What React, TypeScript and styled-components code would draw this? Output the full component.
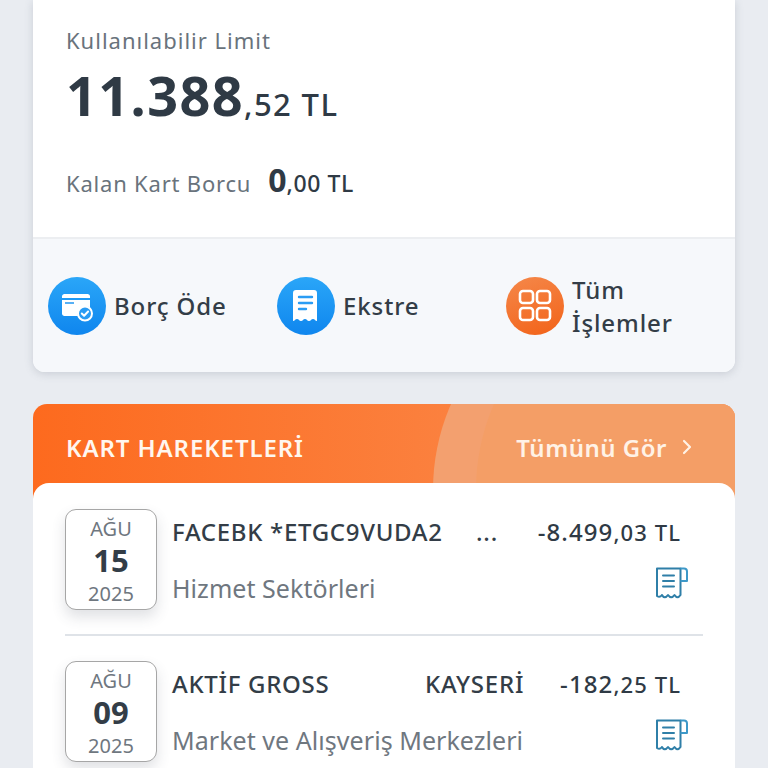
import React from 'react';
import styled, { createGlobalStyle } from 'styled-components';

const GlobalStyle = createGlobalStyle`
  html, body {
    margin: 0;
    padding: 0;
    height: 768px;
    overflow: hidden;
    background: #e9ecf1;
    font-family: 'Noto Sans', 'Open Sans', sans-serif;
    color: #2f3a45;
  }
`;

interface Movement {
  month: string;
  day: string;
  year: string;
  name: string;
  nameWidth: number;
  place: string;
  amount: string;
  cents: string;
  category: string;
}

const movements: Movement[] = [
  { month: 'AĞU', day: '15', year: '2025', name: 'FACEBK *ETGC9VUDA2', nameWidth: 304, place: '...', amount: '-8.499', cents: ',03 TL', category: 'Hizmet Sektörleri' },
  { month: 'AĞU', day: '09', year: '2025', name: 'AKTİF GROSS', nameWidth: 253, place: 'KAYSERİ', amount: '-182', cents: ',25 TL', category: 'Market ve Alışveriş Merkezleri' }
];

const CardPayIcon = () => (
  <svg width="36" height="32" viewBox="0 0 36 32" fill="none">
    <path d="M3 6.5C3 5 4 4 5.500 4h23C30 4 31 5 31 6.500V8H3z" fill="#fff" />
    <path d="M3 10h28v7.500a8 8 0 0 0-12 8.500H5.500C4 26 3 25 3 23.500z" fill="#fff" />
    <path d="M6 13h9" stroke="#1f96f2" strokeWidth="1.500" />
    <circle cx="26" cy="23.500" r="7" fill="#2a9cf4" stroke="#fff" strokeWidth="2" />
    <path d="M22.800 23.500l2.300 2.300 4-4.300" stroke="#fff" strokeWidth="2" strokeLinecap="round" strokeLinejoin="round" />
  </svg>
);

const ReceiptFilledIcon = () => (
  <svg width="28" height="34" viewBox="0 0 28 34" fill="none">
    <path d="M5 1h18a3 3 0 0 1 3 3v28c-2 0-2-2-4-2s-2 2-4 2-2-2-4-2-2 2-4 2-2-2-4-2-2 2-4 2V4a3 3 0 0 1 3-3z" fill="#fff" transform="translate(-1 0)" />
    <path d="M7 8h13M7 14h13M7 20h7" stroke="#2a9cf4" strokeWidth="2.400" strokeLinecap="round" />
  </svg>
);

const GridIcon = () => (
  <svg width="34" height="34" viewBox="0 0 34 34" fill="none" stroke="#fff" strokeWidth="2.600">
    <rect x="2" y="2" width="13" height="12" rx="3" />
    <rect x="19" y="2" width="13" height="12" rx="3" />
    <rect x="2" y="19" width="13" height="12" rx="3" />
    <rect x="19" y="19" width="13" height="12" rx="3" />
  </svg>
);

const ChevronIcon = () => (
  <svg width="10" height="16" viewBox="0 0 10 16" fill="none">
    <path d="M2 2l6 6-6 6" stroke="#fff2e6" strokeWidth="2.200" strokeLinecap="round" strokeLinejoin="round" />
  </svg>
);

const ReceiptIcon = () => (
  <svg width="34" height="36" viewBox="0 0 34 36" fill="none" stroke="#2f7fa8" strokeWidth="2" strokeLinejoin="round">
    <path d="M2 2.500h23.500V29c-2 3-4 3-6 0-2 3-4.500 3-6.500 0-2 3-4.500 3-6 0-1.500 2-3.500 2-5 1z" />
    <path d="M25.500 2.500h3.500a3 3 0 0 1 3 3V15h-6.500" stroke="#3d98c8" />
    <path d="M8 9.500h11M8 15h11M8 20.500h11" strokeLinecap="round" />
  </svg>
);

export default function App() {
  return (
    <>
      <GlobalStyle />
      <Page>
        <LimitCard>
          <LimitBody>
            <LimitLabel>Kullanılabilir Limit</LimitLabel>
            <LimitValue>
              <strong>11.388</strong>
              <span>,52 TL</span>
            </LimitValue>
            <DebtRow>
              <DebtLabel>Kalan Kart Borcu</DebtLabel>
              <DebtValue>
                <strong>0</strong>
                <span>,00 TL</span>
              </DebtValue>
            </DebtRow>
          </LimitBody>
          <Actions>
            <Action>
              <ActionCircle $tone="blue"><CardPayIcon /></ActionCircle>
              <ActionText>Borç Öde</ActionText>
            </Action>
            <Action>
              <ActionCircle $tone="blue"><ReceiptFilledIcon /></ActionCircle>
              <ActionText>Ekstre</ActionText>
            </Action>
            <Action>
              <ActionCircle $tone="orange"><GridIcon /></ActionCircle>
              <ActionText>Tüm<br />İşlemler</ActionText>
            </Action>
          </Actions>
        </LimitCard>

        <MovementsCard>
          <MovementsHeader>
            <ArcOuter />
            <ArcInner />
            <HeaderTitle>KART HAREKETLERİ</HeaderTitle>
            <SeeAll>
              Tümünü Gör
              <ChevronIcon />
            </SeeAll>
          </MovementsHeader>
          <MovementsList>
            {movements.map((item) => (
              <MovementRow key={item.name}>
                <DateBox>
                  <DateMonth>{item.month}</DateMonth>
                  <DateDay>{item.day}</DateDay>
                  <DateYear>{item.year}</DateYear>
                </DateBox>
                <MovementInfo>
                  <InfoTop>
                    <MerchantName $width={item.nameWidth}>{item.name}</MerchantName>
                    <MerchantPlace>{item.place}</MerchantPlace>
                    <Amount>
                      <strong>{item.amount}</strong>
                      <span>{item.cents}</span>
                    </Amount>
                  </InfoTop>
                  <InfoBottom>
                    <Category>{item.category}</Category>
                    <ReceiptIcon />
                  </InfoBottom>
                </MovementInfo>
              </MovementRow>
            ))}
          </MovementsList>
        </MovementsCard>
      </Page>
    </>
  );
}

const Page = styled.div`
  width: 768px;
  height: 768px;
  overflow: hidden;
  padding: 0 33px;
  box-sizing: border-box;
  display: flex;
  flex-direction: column;
  gap: 32px;
  background: #e9ecf1;
`;

const LimitCard = styled.section`
  height: 372px;
  flex: none;
  display: flex;
  flex-direction: column;
  background: #fff;
  border-radius: 0 0 12px 12px;
  overflow: hidden;
  box-shadow: 0 2px 8px rgba(90, 100, 120, 0.22);
`;

const LimitBody = styled.div`
  height: 237px;
  flex: none;
  box-sizing: border-box;
  padding: 26px 33px 0;
  display: flex;
  flex-direction: column;
`;

const LimitLabel = styled.div`
  font-size: 22px;
  line-height: 28px;
  letter-spacing: 1px;
  color: #69737c;
`;

const LimitValue = styled.div`
  margin-top: 13px;
  height: 56px;
  line-height: 56px;
  white-space: nowrap;

  strong {
    font-size: 54px;
    font-weight: 700;
    letter-spacing: 1.4px;
    color: #2f3a45;
  }

  span {
    font-size: 31px;
    font-weight: 500;
    letter-spacing: 1.4px;
    color: #2f3a45;
  }
`;

const DebtRow = styled.div`
  margin-top: 35px;
  display: flex;
  align-items: baseline;
  gap: 17px;
`;

const DebtLabel = styled.div`
  font-size: 22px;
  letter-spacing: 0.8px;
  color: #69737c;
`;

const DebtValue = styled.div`
  strong {
    font-size: 32px;
    font-weight: 700;
  }

  span {
    font-size: 23px;
    font-weight: 500;
    letter-spacing: 0.6px;
  }
`;

const Actions = styled.div`
  flex: 1;
  display: grid;
  grid-template-columns: 229px 229px 1fr;
  align-items: center;
  padding-left: 15px;
  background: #f6f8fb;
  border-top: 2px solid #eceef1;
`;

const Action = styled.div`
  display: flex;
  align-items: center;
  gap: 8px;
`;

const ActionCircle = styled.div<{ $tone: 'blue' | 'orange' }>`
  width: 58px;
  height: 58px;
  flex: none;
  border-radius: 50%;
  display: flex;
  align-items: center;
  justify-content: center;
  background: ${(props) =>
    props.$tone === 'blue'
      ? 'linear-gradient(180deg, #2aa6f8 0%, #0f86ee 100%)'
      : 'linear-gradient(160deg, #f5884a 0%, #f26218 100%)'};
`;

const ActionText = styled.div`
  font-size: 24px;
  line-height: 33px;
  font-weight: 500;
  letter-spacing: 0.9px;
  color: #333d47;
`;

const MovementsCard = styled.section`
  flex: none;
  height: 420px;
  border-radius: 14px 14px 0 0;
  overflow: hidden;
`;

const MovementsHeader = styled.div`
  position: relative;
  height: 95px;
  box-sizing: border-box;
  padding: 0 43px 9px 33px;
  display: flex;
  align-items: center;
  justify-content: space-between;
  overflow: hidden;
  background: linear-gradient(90deg, #fd6a1e 0%, #fb813f 60%, #fb8a4a 100%);
`;

const HeaderTitle = styled.div`
  position: relative;
  font-size: 24px;
  font-weight: 600;
  letter-spacing: 0.9px;
  color: #fff7ef;
`;

const SeeAll = styled.div`
  position: relative;
  display: flex;
  align-items: center;
  gap: 15px;
  font-size: 24px;
  font-weight: 600;
  letter-spacing: 0.5px;
  color: #fff2e6;
`;

const ArcOuter = styled.div`
  position: absolute;
  left: 400px;
  top: -128px;
  width: 428px;
  height: 428px;
  border-radius: 50%;
  background: #f3a06f;
`;

const ArcInner = styled.div`
  position: absolute;
  left: 443px;
  top: -128px;
  width: 428px;
  height: 428px;
  border-radius: 50%;
  background: #f49e66;
`;

const MovementsList = styled.div`
  position: relative;
  margin-top: -16px;
  background: #fff;
  border-radius: 16px 16px 0 0;
  height: 341px;
  padding: 26px 32px 0 32px;
  box-sizing: border-box;
`;

const MovementRow = styled.div`
  display: flex;
  gap: 15px;
  height: 125px;
  margin-bottom: 25px;
  border-bottom: 2px solid #dfe3e8;

  &:last-child {
    border-bottom: none;
  }
`;

const DateBox = styled.div`
  width: 92px;
  height: 101px;
  flex: none;
  box-sizing: border-box;
  border: 1px solid #a6a6a6;
  border-radius: 11px;
  background: #fff;
  box-shadow: 0 7px 14px rgba(60, 70, 90, 0.16);
  display: flex;
  flex-direction: column;
  align-items: center;
  padding-top: 5px;
`;

const DateMonth = styled.div`
  font-size: 20px;
  line-height: 27px;
  color: #6f777f;
`;

const DateDay = styled.div`
  font-size: 31px;
  line-height: 36px;
  font-weight: 700;
  color: #333d47;
`;

const DateYear = styled.div`
  margin-top: 2px;
  font-size: 20px;
  line-height: 27px;
  color: #6f777f;
`;

const MovementInfo = styled.div`
  flex: 1;
  min-width: 0;
  display: flex;
  flex-direction: column;
  padding-right: 14px;
`;

const InfoTop = styled.div`
  display: flex;
  align-items: baseline;
  height: 46px;
  line-height: 46px;
  white-space: nowrap;
`;

const MerchantName = styled.div<{ $width: number }>`
  flex: none;
  width: ${(props) => props.$width}px;
  font-size: 24px;
  font-weight: 500;
  letter-spacing: 0.7px;
  color: #333d47;
`;

const MerchantPlace = styled.div`
  flex: 1;
  font-size: 24px;
  font-weight: 500;
  letter-spacing: 0.8px;
  color: #333d47;
`;

const Amount = styled.div`
  flex: none;
  margin-right: 8px;
  letter-spacing: 1.1px;

  strong {
    font-size: 24px;
    font-weight: 500;
  }

  span {
    font-size: 22px;
    font-weight: 500;
  }
`;

const InfoBottom = styled.div`
  display: flex;
  align-items: flex-start;
  justify-content: space-between;
  margin-top: 11px;
`;

const Category = styled.div`
  padding-top: 5px;
  font-size: 25px;
  line-height: 34px;
  letter-spacing: 0.05px;
  color: #6f777f;
`;
